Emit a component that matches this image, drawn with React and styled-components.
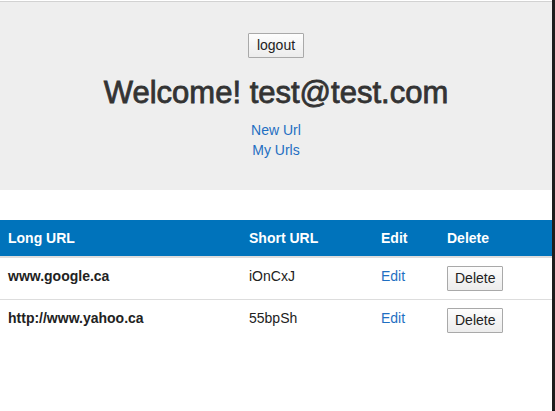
import React from "react";
import styled, { createGlobalStyle } from "styled-components";

const GlobalStyle = createGlobalStyle`
  body {
    margin: 0;
    background: #fff;
    font-family: "Liberation Sans", Arial, sans-serif;
    font-size: 14px;
    line-height: 20px;
    color: #333;
  }
`;

const Page = styled.div`
  display: flex;
  min-height: 100vh;
`;

const Main = styled.div`
  flex: 1;
  padding-top: 1px;
`;

const WindowEdge = styled.div`
  width: 3px;
  background: #1e1e1e;
`;

const Jumbotron = styled.div`
  background: #eeeeee;
  border-top: 1px solid #d2d2d2;
  padding: 31px 0 30px;
  text-align: center;
`;

const Button = styled.button`
  font-family: "Liberation Sans", Arial, sans-serif;
  font-size: 14px;
  line-height: 17px;
  color: #222;
  padding: ${(p) => (p.small ? "3px 7px" : "3px 8px")};
  border: 1px solid #a9a9a9;
  border-radius: 1px;
  background: linear-gradient(#fdfdfd, #ececec);
  cursor: pointer;
`;

const Title = styled.h1`
  margin: 18px 0 10px;
  font-size: 31px;
  line-height: 34px;
  font-weight: 500;
  color: #333;
  -webkit-text-stroke: 0.8px #333;
`;

const NavLink = styled.a`
  display: block;
  color: #1f6fc2;
  text-decoration: none;
`;

const Table = styled.table`
  width: 100%;
  margin-top: 30px;
  border-collapse: collapse;
`;

const Th = styled.th`
  width: ${(p) => p.w || "auto"};
  padding: 8px;
  text-align: left;
  font-weight: bold;
  color: #fff;
  background: #0073bb;
  border-bottom: 2px solid #dddddd;
`;

const Td = styled.td`
  padding: 8px;
  vertical-align: top;
  font-weight: ${(p) => (p.bold ? "bold" : "normal")};
  color: #222;
  border-top: 1px solid #dddddd;
`;

const urls = [
  { long: "www.google.ca", short: "iOnCxJ" },
  { long: "http://www.yahoo.ca", short: "55bpSh" },
];

export default function App() {
  return (
    <>
      <GlobalStyle />
      <Page>
        <Main>
          <Jumbotron>
            <Button>logout</Button>
            <Title>Welcome! test@test.com</Title>
            <NavLink href="#">New Url</NavLink>
            <NavLink href="#">My Urls</NavLink>
          </Jumbotron>
          <Table>
            <thead>
              <tr>
                <Th w="225px">Long URL</Th>
                <Th w="116px">Short URL</Th>
                <Th w="50px">Edit</Th>
                <Th>Delete</Th>
              </tr>
            </thead>
            <tbody>
              {urls.map((u) => (
                <tr key={u.short}>
                  <Td bold>{u.long}</Td>
                  <Td>{u.short}</Td>
                  <Td>
                    <NavLink href="#">Edit</NavLink>
                  </Td>
                  <Td>
                    <Button small>Delete</Button>
                  </Td>
                </tr>
              ))}
            </tbody>
          </Table>
        </Main>
        <WindowEdge />
      </Page>
    </>
  );
}
